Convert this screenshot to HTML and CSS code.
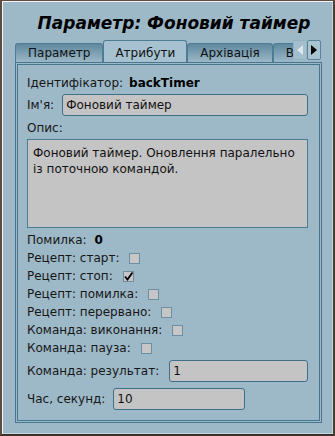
FILE: index.html
```html
<!DOCTYPE html>
<html lang="uk">
<head>
  <meta charset="UTF-8" />
  <title>Параметр: Фоновий таймер</title>
  <link rel="stylesheet" href="styles.css">
</head>
<body>

<div class="window">
  <h1 class="title">Параметр: Фоновий таймер</h1>

  <div class="tabbar">
    <div class="tabs">
      <div class="tab">Параметр</div>
      <div class="tab active">Атрибути</div>
      <div class="tab">Архівація</div>
      <div class="tab">Виконання</div>
    </div>
    <div class="scroll">
      <span class="arrow left off"></span>
      <span class="arrow right"></span>
    </div>
  </div>

  <div class="panel">
    <div class="row r-id">
      <span class="lbl">Ідентифікатор:</span>
      <b>backTimer</b>
    </div>
    <div class="row r-input">
      <span class="lbl">Ім'я:</span>
      <div class="field grow">Фоновий таймер</div>
    </div>
    <div class="row r-label">
      <span class="lbl">Опис:</span>
    </div>
    <div class="field area">Фоновий таймер. Оновлення паралельно із поточною командой.</div>
    <div class="row r-err">
      <span class="lbl">Помилка:</span>
      <b>0</b>
    </div>
    <div class="row r-check">
      <span class="lbl">Рецепт: старт:</span>
      <span class="box"></span>
    </div>
    <div class="row r-check">
      <span class="lbl">Рецепт: стоп:</span>
      <span class="box"><svg width="11" height="11" viewBox="0 0 11 11"><path d="M2 5.5 L4.5 8.5 L9.5 1.5" fill="none" stroke="#000" stroke-width="1.8"/></svg></span>
    </div>
    <div class="row r-check">
      <span class="lbl">Рецепт: помилка:</span>
      <span class="box"></span>
    </div>
    <div class="row r-check">
      <span class="lbl">Рецепт: перервано:</span>
      <span class="box"></span>
    </div>
    <div class="row r-check">
      <span class="lbl">Команда: виконання:</span>
      <span class="box"></span>
    </div>
    <div class="row r-check">
      <span class="lbl">Команда: пауза:</span>
      <span class="box"></span>
    </div>
    <div class="row r-input r-result">
      <span class="lbl">Команда: результат:</span>
      <div class="field grow">1</div>
    </div>
    <div class="row r-input r-time">
      <span class="lbl">Час, секунд:</span>
      <div class="field short">10</div>
    </div>
  </div>
</div>

</body>
</html>
```

FILE: styles.css
```css
body {
  margin: 0;
  font-family: "DejaVu Sans", sans-serif;
  font-size: 12px;
  color: #161616;
}

.window {
  box-sizing: border-box;
  width: 335px;
  height: 436px;
  background: #9db9c8;
  border-left: 2px solid #5e4b3f;
  border-right: 2px solid #4a3d34;
  border-top: 1px solid #5e4b3f;
  border-bottom: 2px solid #3a302a;
  box-shadow: inset 1px 1px 0 #f2f6f8, inset -1px -1px 0 #c6d6de;
  display: flex;
  flex-direction: column;
}

.title {
  margin: 0;
  height: 39px;
  line-height: 44px;
  font-size: 17px;
  font-style: italic;
  font-weight: bold;
  color: #000;
  text-align: center;
  padding-left: 13px;
}

.tabbar {
  display: flex;
  height: 22px;
  margin-left: 13px;
  margin-right: 11px;
}

.tabs {
  width: 278px;
  overflow: hidden;
  display: flex;
  align-items: flex-end;
}

.tab {
  flex: none;
  box-sizing: border-box;
  height: 19px;
  line-height: 18px;
  padding: 0 12px;
  border: 1px solid #4e7c95;
  border-bottom: none;
  border-radius: 3px 3px 0 0;
  background: linear-gradient(#5f889f, #9bb8c7);
  color: #111;
}

.tab.active {
  height: 23px;
  line-height: 24px;
  padding: 0 11px;
  background: #a6c2d0;
  margin-bottom: -1px;
  position: relative;
}

.scroll {
  display: flex;
  align-items: flex-start;
}

.arrow {
  box-sizing: border-box;
  width: 14px;
  height: 20px;
  border: 1px solid #5b8399;
  border-radius: 2px;
  background: #a9c4d1;
  display: flex;
  align-items: center;
  justify-content: center;
}

.arrow::after {
  content: "";
  border-top: 5px solid transparent;
  border-bottom: 5px solid transparent;
}

.arrow.left::after {
  border-right: 6px solid #000;
}

.arrow.right::after {
  border-left: 6px solid #000;
}

.arrow.off {
  border-color: #94b2c1;
  background: #a3bfcd;
}

.arrow.off::after {
  border-right-color: #dde7ec;
}

.panel {
  box-sizing: border-box;
  width: 307px;
  height: 361px;
  margin-left: 13px;
  border: 3px double #46768f;
  padding: 8px 11px 0 9px;
  display: flex;
  flex-direction: column;
}

.row {
  display: flex;
  align-items: center;
  height: 18px;
  white-space: nowrap;
}

.row b {
  margin-left: 6px;
  color: #000;
}

.r-id {
  height: 20px;
}

.r-input {
  height: 22px;
  margin-top: 1px;
}

.r-input .lbl {
  margin-right: 8px;
}

.r-label {
  margin-top: 3px;
}

.r-err {
  margin-top: 3px;
}

.r-err b {
  margin-left: 8px;
}

.r-result {
  margin-top: 3px;
}

.r-result .lbl {
  margin-right: 10px;
}

.r-time {
  margin-top: 6px;
}

.field {
  box-sizing: border-box;
  height: 22px;
  line-height: 20px;
  padding: 0 3px;
  background: #c4c4c4;
  border: 1px solid #3f6f8b;
  border-radius: 3px;
  color: #111;
}

.grow {
  flex: 1;
}

.short {
  width: 132px;
}

.area {
  height: 89px;
  margin-top: 2px;
  padding: 5px 5px;
  line-height: 16px;
  border-radius: 0;
  border-color: #4d7c95;
}

.box {
  box-sizing: border-box;
  width: 11px;
  height: 11px;
  margin-left: 10px;
  background: #c6c6c6;
  border: 1px solid #6b8ea2;
  display: flex;
}

.box svg {
  margin: -1px;
}
```
